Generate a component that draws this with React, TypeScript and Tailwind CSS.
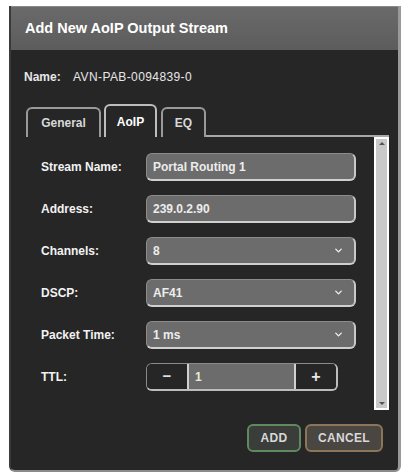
import React from 'react';
import { ChevronDown } from 'lucide-react';

const inputCls =
  'h-7 w-[210px] flex items-center px-[6px] bg-[#6c6c6c] rounded-md border border-[#8c8c8c] border-b-2 border-r-2 border-b-[#cfcfcf] border-r-[#c8c8c8] text-[12px] font-bold text-[#ececec]';

function Row({ label, children }: { label: string; children: React.ReactNode }) {
  return (
    <div className="flex items-center h-7">
      <div className="w-[105px] text-[12px] font-bold text-[#f2f2f2]">{label}</div>
      {children}
    </div>
  );
}

function TextBox({ value }: { value: string }) {
  return <div className={inputCls}>{value}</div>;
}

function SelectBox({ value }: { value: string }) {
  return (
    <div className={inputCls + ' justify-between'}>
      <span>{value}</span>
      <ChevronDown size={11} strokeWidth={3} className="text-[#f0f0f0] mr-[4px]" />
    </div>
  );
}

export default function App() {
  return (
    <div className="w-[406px] h-[476px] bg-white pl-[9px] pt-[6px]" style={{ fontFamily: '"Liberation Sans", Arial, sans-serif' }}>
      <div className="w-[392px] h-[466px] bg-[#262626] border-l-2 border-l-[#3a3a3a] border-r-[3px] border-r-[#9a9a9a] border-b-2 border-b-[#8a8a8a] rounded-b-md flex flex-col">
        {/* header */}
        <div className="h-[44px] bg-gradient-to-b from-[#6a6a6a] to-[#5c5c5c] border-t border-[#8a8a8a] flex items-center pl-[14px]">
          <span className="text-[14.5px] font-bold text-white">Add New AoIP Output Stream</span>
        </div>

        <div className="flex items-center h-[54px] pl-[13px] text-[12px] text-[#e6e6e6]">
          <span className="font-bold w-[49px]">Name:</span>
          <span className="tracking-[0.4px]">AVN-PAB-0094839-0</span>
        </div>

        {/* tabs */}
        <div className="flex items-end pl-[15px] h-[33px]">
          <div className="w-[75px] h-[30px] mr-[3px] border-2 border-b-0 border-[#9a9a9a] rounded-t-md flex items-center justify-center text-[12px] font-bold text-[#d8d8d8]">General</div>
          <div className="w-[53px] h-[33px] mr-[4px] border-2 border-b-0 border-[#bdbdbd] rounded-t-md flex items-center justify-center text-[12px] font-bold text-white">AoIP</div>
          <div className="w-[45px] h-[30px] border-2 border-b-0 border-[#9a9a9a] rounded-t-md flex items-center justify-center text-[12px] font-bold text-[#d8d8d8]">EQ</div>
          <div className="flex-1 mr-[9px] border-b-2 border-[#a8a8a8]" />
        </div>

        {/* panel */}
        <div className="flex pl-[15px] h-[272px]">
          <div className="flex-1 flex flex-col gap-[14px] pt-[16px] pl-[15px]">
            <Row label="Stream Name:"><TextBox value="Portal Routing 1" /></Row>
            <Row label="Address:"><TextBox value="239.0.2.90" /></Row>
            <Row label="Channels:"><SelectBox value="8" /></Row>
            <Row label="DSCP:"><SelectBox value="AF41" /></Row>
            <Row label="Packet Time:"><SelectBox value="1 ms" /></Row>
            <Row label="TTL:">
              <div className="flex h-7 rounded-md border border-[#8a8a8a] border-b-2 border-r-2 border-b-[#bdbdbd] border-r-[#bdbdbd] overflow-hidden">
                <div className="w-[40px] bg-[#262626] flex items-center justify-center text-[15px] font-bold text-[#e0e0e0]">−</div>
                <div className="w-[109px] bg-[#6c6c6c] border-x-2 border-[#d0d0d0] flex items-center pl-[6px] text-[12px] font-bold text-[#e6ecd0]">1</div>
                <div className="w-[40px] bg-[#262626] flex items-center justify-center text-[16px] font-bold text-[#e8e8e8]">+</div>
              </div>
            </Row>
          </div>
          {/* scrollbar */}
          <div className="w-[15px] mr-[9px] h-[273px] bg-[#c9c9c9] border-2 border-white flex flex-col items-center justify-between py-[3px]">
            <div className="w-0 h-0 border-x-[3px] border-x-transparent border-b-[3px] border-b-[#555]" />
            <div className="w-0 h-0 border-x-[3px] border-x-transparent border-t-[3px] border-t-[#555]" />
          </div>
        </div>

        {/* buttons */}
        <div className="flex justify-end gap-[4px] pr-[15px] mt-[15px]">
          <div className="w-[54px] h-[28px] rounded-md bg-[#3a3d3a] border-2 border-[#5f8a5f] flex items-center justify-center text-[12px] font-bold tracking-wide text-[#d8d8d8]">ADD</div>
          <div className="w-[78px] h-[28px] rounded-md bg-[#4a4642] border-2 border-[#8c7558] flex items-center justify-center text-[12px] font-bold tracking-wide text-[#d8d8d8]">CANCEL</div>
        </div>
      </div>
    </div>
  );
}
